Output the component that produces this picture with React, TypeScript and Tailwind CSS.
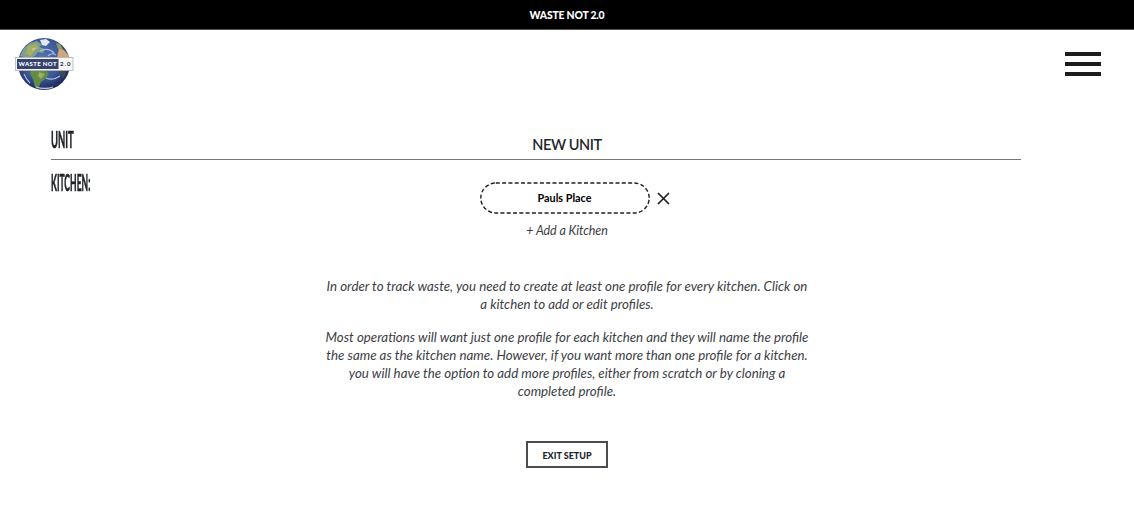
import React from "react";

function Globe() {
  return (
    <svg className="block h-[56px] w-[62px]" viewBox="0 0 62 56" role="img">
      <defs>
        <radialGradient id="sea" cx="0.45" cy="0.4" r="0.6">
          <stop offset="0" stopColor="#5577b4" />
          <stop offset="0.65" stopColor="#3d5797" />
          <stop offset="1" stopColor="#1d2858" />
        </radialGradient>
        <clipPath id="disc">
          <circle cx="30" cy="28" r="26" />
        </clipPath>
        <filter id="soft" x="-10%" y="-10%" width="120%" height="120%">
          <feGaussianBlur stdDeviation="0.6" />
        </filter>
      </defs>
      <circle cx="30" cy="28" r="26" fill="url(#sea)" />
      <g clipPath="url(#disc)" filter="url(#soft)">
        <path d="M6 20 L10 12 L16 7 L23 5 L28 9 L25 11 L31 13 L29 17 L24 16 L21 20 L17 22 L12 22 Z" fill="#7fa08a" />
        <path d="M14 10 L22 8 L25 12 L20 15 L17 20 L12 18 Z" fill="#a5ae62" />
        <path d="M18 12 L22 12 L19 16 Z" fill="#cfc08a" />
        <path d="M26 4 L32 3 L36 6 L32 10 L28 9 Z" fill="#dfe9ef" />
        <path d="M45 12 L50 14 L55 20 L56 28 L49 24 L43 22 L44 17 Z" fill="#d0a878" />
        <path d="M42 7 L46 8 L49 13 L44 13 Z" fill="#8c9b60" />
        <path d="M17 33 L30 33 L35 38 L31 43 L27 46 L24 53 L21 51 L19 43 L16 38 Z" fill="#5f8d45" />
        <path d="M25 36 L31 38 L27 43 L24 40 Z" fill="#a3a768" />
        <path d="M47 33 L53 33 L50 42 L47 39 Z" fill="#3f4a4c" />
        <path d="M26 15 Q34 11 40 17 M32 42 Q39 45 46 40 M10 38 Q12 43 16 47 M34 20 Q38 16 42 19" fill="none" stroke="#a9bfe0" strokeWidth="1.1" />
        <path d="M22 51 Q31 54 39 51" fill="none" stroke="#b9c3d8" strokeWidth="1.3" />
      </g>
      <rect x="1.5" y="21.5" width="57.5" height="13" fill="#f6f6f6" stroke="#b4b4b4" strokeWidth="0.8" />
      <rect x="3" y="23" width="41.5" height="10" fill="#35446f" />
      <text x="4.5" y="30.4" textLength="38" className="fill-white font-['Lato'] text-[6px] font-black">WASTE NOT</text>
      <text x="46" y="30.4" textLength="10.5" className="fill-[#33384c] font-['Lato'] text-[6px] font-black">2.0</text>
    </svg>
  );
}

export default function App() {
  return (
    <div className="h-[530px] w-full overflow-hidden bg-white font-['Lato',sans-serif] text-[#212529]">
      <header className="flex h-[30px] items-center justify-center border-b border-[#555] bg-black pt-[2px] text-[10.4px] font-black tracking-[-0.2px] text-white">
        WASTE NOT 2.0
      </header>
      <nav className="flex h-[88px] items-start justify-between pl-[14px] pr-[33px] pt-[6px]">
        <Globe />
        <button className="mt-[16px] flex w-[36px] flex-col gap-[6px]" aria-label="Menu">
          <span className="h-[4px] bg-[#1b1c22]" />
          <span className="h-[4px] bg-[#1b1c22]" />
          <span className="h-[4px] bg-[#1b1c22]" />
        </button>
      </nav>
      <main className="ml-[51px] w-[970px]">
        <div className="grid h-[42px] grid-cols-[1fr_auto_1fr] border-b border-[#777]">
          <h2 className="mt-[8px] h-[28px] origin-left scale-x-[0.43] whitespace-nowrap text-[22px] font-bold leading-[28px] [-webkit-text-stroke:0.6px_#212529]">UNIT</h2>
          <h1 className="ml-[62px] mt-[15px] text-[14.5px] font-semibold leading-[24px] tracking-[-0.4px]">NEW UNIT</h1>
        </div>
        <h2 className="mt-[9px] h-[28px] w-[200px] origin-left scale-x-[0.39] whitespace-nowrap text-[22px] font-bold leading-[28px] [-webkit-text-stroke:0.6px_#212529]">KITCHEN:</h2>
      </main>
      <section className="-mt-[15px] flex flex-col items-center">
        <div className="flex items-center gap-[7px] pl-[15px]">
          <div className="relative flex h-[32px] w-[170px] items-center justify-center text-[10.8px] font-bold text-black">
            <svg className="absolute inset-0 h-[32px] w-[170px]" viewBox="0 0 170 32">
              <rect x="0.8" y="1" width="168.4" height="30" rx="15" fill="none" stroke="#202124" strokeWidth="1.4" strokeDasharray="4 2.3" />
            </svg>
            Pauls Place
          </div>
          <svg className="h-[13px] w-[13px]" viewBox="0 0 13 13">
            <path d="M1 1 L12 12 M12 1 L1 12" stroke="#202124" strokeWidth="1.7" />
          </svg>
        </div>
        <p className="mt-[8px] text-[12.5px] italic leading-[18px] tracking-[-0.1px] text-[#3c4045]">+ Add a Kitchen</p>
        <div className="mt-[37px] flex flex-col items-center whitespace-nowrap text-[13.3px] italic leading-[18px] text-[#3c4045]">
          <p>In order to track waste, you need to create at least one profile for every kitchen. Click on</p>
          <p>a kitchen to add or edit profiles.</p>
          <p className="mt-[15px]">Most operations will want just one profile for each kitchen and they will name the profile</p>
          <p>the same as the kitchen name. However, if you want more than one profile for a kitchen.</p>
          <p>you will have the option to add more profiles, either from scratch or by cloning a</p>
          <p>completed profile.</p>
        </div>
        <button className="mt-[41px] h-[27px] w-[82px] border-2 border-[#4a4e53] pt-[2px] text-[9px] font-black">EXIT SETUP</button>
      </section>
    </div>
  );
}
